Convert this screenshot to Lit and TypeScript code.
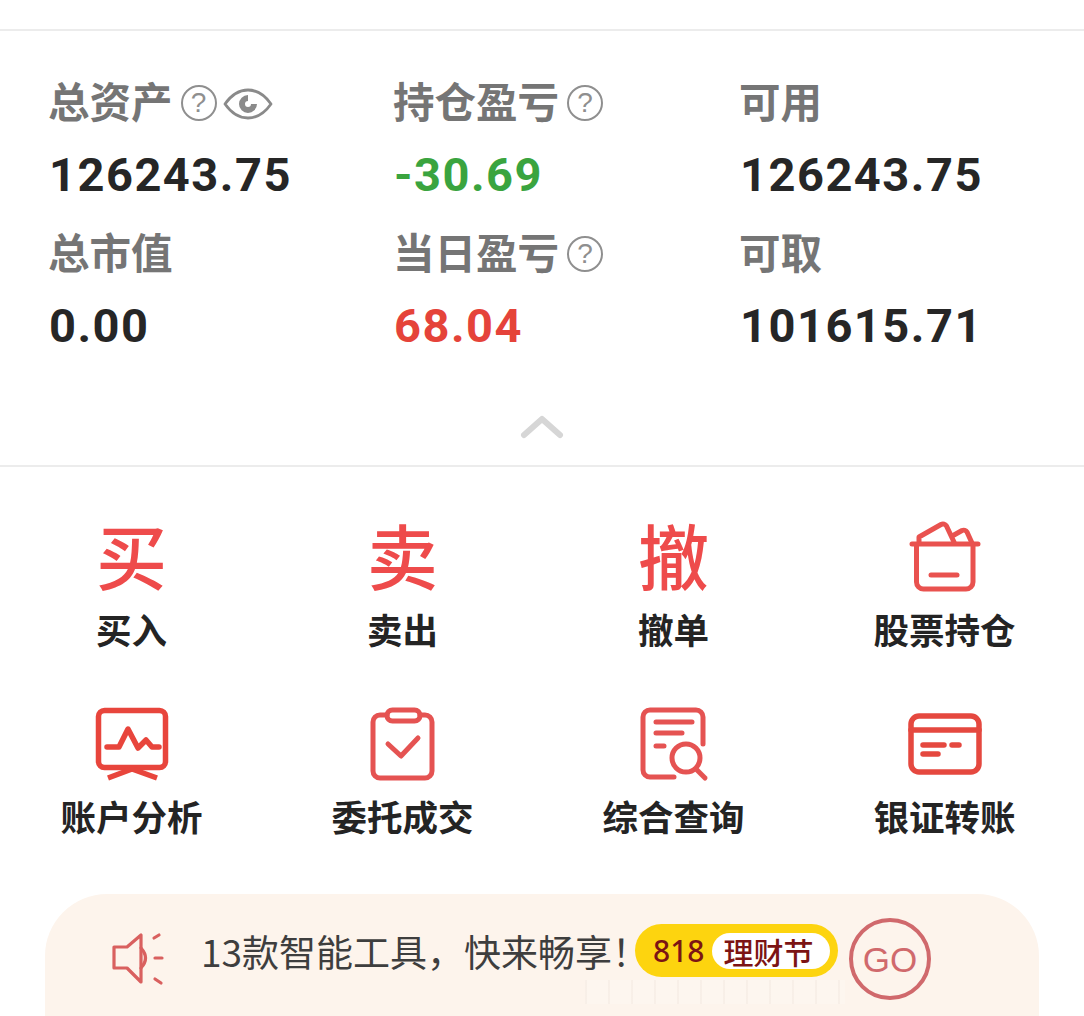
import { LitElement, html, css, svg } from "lit";
import { customElement } from "lit/decorators.js";

const help = html`<span class="help">?</span>`;
const eye = html`<svg class="eye" width="50" height="34" viewBox="0 0 50 34" fill="none" stroke="#8a8a8a">
  <path d="M2 17C9 7 17 3 25 3s16 4 23 14c-7 10-15 14-23 14S9 27 2 17z" stroke-width="2.8" stroke-linejoin="round"/>
  <path d="M25 8a9 9 0 1 0 9 9h-6a3 3 0 1 1-3-3z" fill="#8a8a8a" stroke="none"/>
</svg>`;

const stats = [
  { label: "总资产", value: "126243.75", extra: html`${help}${eye}` },
  { label: "持仓盈亏", value: "-30.69", cls: "green", extra: help },
  { label: "可用", value: "126243.75" },
  { label: "总市值", value: "0.00" },
  { label: "当日盈亏", value: "68.04", cls: "red", extra: help },
  { label: "可取", value: "101615.71" },
];

const icon = (x: number, y: number, color: string, w: number, body: unknown) => html`<svg class="icon" width="80" height="80"
  viewBox="${x} ${y} 80 80" fill="none" stroke="${color}" stroke-width="${w}" stroke-linecap="round" stroke-linejoin="round">${body}</svg>`;

const tools = [
  { label: "买入", glyph: "买" },
  { label: "卖出", glyph: "卖" },
  { label: "撤单", glyph: "撤" },
  {
    label: "股票持仓",
    icon: icon(905, 518, "#e9524f", 5, svg`
      <path d="M912 544H978M916.500 544V582a7 7 0 0 0 7 7H966a7 7 0 0 0 7-7V544"/>
      <path d="M931 575H957"/>
      <path d="M919 543V537L941 524.500a4 4 0 0 1 5.500 1.500L954 542M954 535L962 530.500a4 4 0 0 1 5 1.500L972 543"/>`),
  },
  {
    label: "账户分析",
    icon: icon(92, 705, "#e8453c", 5.5, svg`
      <rect x="98.500" y="710.500" width="67" height="57" rx="6"/>
      <path d="M107 747H119L128 729L138 748L146 740L152 747H159"/>
      <path d="M108 778L132 769L157 778" stroke-linecap="butt"/>`),
  },
  {
    label: "委托成交",
    icon: icon(363, 705, "#e55352", 5, svg`
      <path d="M387 715H380a7 7 0 0 0-7 7V771a7 7 0 0 0 7 7H425a7 7 0 0 0 7-7V722a7 7 0 0 0-7-7H420"/>
      <rect x="387" y="710" width="33" height="11" rx="5.500"/>
      <path d="M388 744L401 756L418 738"/>`),
  },
  {
    label: "综合查询",
    icon: icon(634, 705, "#e55352", 5, svg`
      <path d="M703 744V717a7 7 0 0 0-7-7H650a7 7 0 0 0-7 7V770a7 7 0 0 0 7 7H674"/>
      <path d="M656 722H692M656 733H682M656 746H664"/>
      <circle cx="686" cy="758" r="14"/>
      <path d="M697 770L705 778"/>`),
  },
  {
    label: "银证转账",
    icon: icon(905, 705, "#e5483f", 5.5, svg`
      <rect x="911" y="716" width="68" height="56" rx="8"/>
      <path d="M911 730H979"/>
      <path d="M923 745H944M952 745H959M923 754H938"/>`),
  },
];

@customElement("app-root")
export class AppRoot extends LitElement {
  static styles = css`
    :host {
      display: block;
      width: 1084px;
      height: 1016px;
      overflow: hidden;
      background: #fff;
      font-family: "Noto Sans CJK SC", "Noto Sans", sans-serif;
    }
    .top {
      height: 29px;
      border-bottom: 2px solid #ececec;
    }
    .stats {
      padding-top: 47px;
      height: 387px;
      border-bottom: 2px solid #ececec;
    }
    .grid {
      display: grid;
      grid-template-columns: 345px 346px 1fr;
      row-gap: 23px;
      padding-left: 48px;
    }
    .label {
      display: flex;
      align-items: center;
      height: 50px;
      box-sizing: border-box;
      padding-bottom: 7px;
      font-size: 41.500px;
      font-weight: 700;
      color: #757575;
      white-space: nowrap;
    }
    .help {
      width: 32px;
      height: 32px;
      margin: 7px 0 0 8px;
      border: 2.500px solid #8f8f8f;
      border-radius: 50%;
      display: flex;
      align-items: center;
      justify-content: center;
      font: 400 28px/1 "Liberation Sans", sans-serif;
      color: #8f8f8f;
    }
    .eye {
      margin: 9px 0 0 6px;
    }
    .value {
      height: 62px;
      margin: 16px 0 0 1px;
      font: 700 47px/62px Roboto, sans-serif;
      letter-spacing: 1.500px;
      color: #262626;
    }
    .green { color: #3aa43f; }
    .red { color: #e5433a; }
    .chev {
      display: flex;
      justify-content: center;
      margin-top: 57px;
    }
    .tools {
      display: grid;
      grid-template-columns: repeat(4, 271px);
      row-gap: 54px;
      padding-top: 51px;
      margin-left: -4px;
    }
    .tool {
      display: flex;
      flex-direction: column;
      align-items: center;
    }
    .glyph {
      width: 80px;
      height: 80px;
      font-size: 71px;
      line-height: 70px;
      text-align: center;
      font-weight: 500;
      color: #ee4b4b;
    }
    .icon { display: block; }
    .name {
      margin-top: 9px;
      height: 44px;
      font-size: 35.500px;
      line-height: 44px;
      font-weight: 700;
      color: #242424;
      white-space: nowrap;
    }
    .banner {
      margin: 56px 45px 0;
      height: 170px;
      border-radius: 62px;
      background: #fdf4ec;
      display: flex;
      align-items: flex-start;
      padding: 24px 0 0 65px;
      position: relative;
    }
    .speaker { margin-top: 10px; flex: none; }
    .msg {
      margin-left: 35px;
      width: 431px;
      height: 66px;
      font-size: 37px;
      line-height: 66px;
      font-weight: 400;
      color: #3e3e3e;
      white-space: nowrap;
      flex: none;
    }
    .pill {
      margin: 6px 0 0 3px;
      width: 203px;
      height: 53px;
      box-sizing: border-box;
      border-radius: 27px;
      background: #fdd40f;
      display: flex;
      align-items: center;
      padding: 0 8px 0 18px;
      color: #7c1414;
      flex: none;
    }
    .pill b {
      font: 500 30px/1 "Noto Sans", sans-serif;
    }
    .pill span {
      margin-left: auto;
      width: 118px;
      height: 36px;
      box-sizing: border-box;
      padding-right: 5px;
      border-radius: 18px;
      background: #fff;
      text-align: center;
      font-size: 30px;
      line-height: 36px;
      font-weight: 500;
    }
    .go {
      margin-left: 11px;
      width: 82px;
      height: 82px;
      box-sizing: border-box;
      border: 4px solid #d0696c;
      border-radius: 50%;
      display: flex;
      align-items: center;
      justify-content: center;
      font: 400 35px/1 "Liberation Sans", sans-serif;
      color: #d0696c;
      flex: none;
    }
    .reflect {
      position: absolute;
      left: 540px;
      top: 86px;
      width: 260px;
      height: 24px;
      background: repeating-linear-gradient(90deg, rgba(150, 150, 150, 0.05) 0 2px, rgba(255, 255, 255, 0.18) 2px 23px);
    }
  `;

  render() {
    return html`
      <div class="top"></div>
      <section class="stats">
        <div class="grid">
          ${stats.map(
            (s) => html`<div>
              <div class="label">${s.label}${s.extra ?? ""}</div>
              <div class="value ${s.cls ?? ""}">${s.value}</div>
            </div>`
          )}
        </div>
        <div class="chev">
          <svg width="44" height="26" viewBox="0 0 44 26" fill="none" stroke="#d6d6d6" stroke-width="6" stroke-linecap="round" stroke-linejoin="round">
            <path d="M4 21L22 5L40 21"/>
          </svg>
        </div>
      </section>
      <section class="tools">
        ${tools.map(
          (t) => html`<div class="tool">
            ${t.glyph ? html`<div class="glyph">${t.glyph}</div>` : t.icon}
            <div class="name">${t.label}</div>
          </div>`
        )}
      </section>
      <section class="banner">
        <svg class="speaker" width="56" height="60" viewBox="110 928 56 60" fill="none" stroke="#d9605f" stroke-width="3.200" stroke-linecap="round" stroke-linejoin="round">
          <path d="M114 947H127L141 935V982L127 968H114z"/>
          <path d="M141 948q9 10 0 20"/>
          <path d="M154 938L159 935M155 958H162M155 979L161 983"/>
        </svg>
        <div class="msg">13款智能工具，快来畅享！</div>
        <div class="pill"><b>818</b><span>理财节</span></div>
        <div class="go">GO</div>
        <div class="reflect"></div>
      </section>
    `;
  }
}
